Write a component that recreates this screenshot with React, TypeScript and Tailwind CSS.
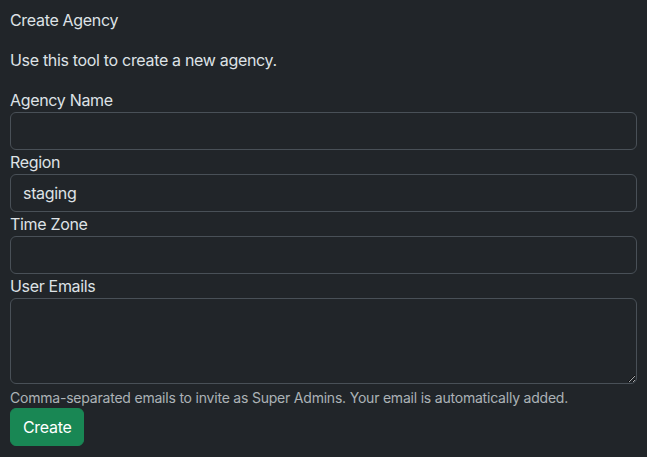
import React, { useState } from "react";

const fields = [
  { id: "name", label: "Agency Name", value: "" },
  { id: "region", label: "Region", value: "staging" },
  { id: "tz", label: "Time Zone", value: "" },
];

const inputClass =
  "block w-full h-[38px] px-3 py-1.5 text-base leading-6 tracking-[-0.02em] text-[#dee2e6] bg-[#212529] border border-[#495057] rounded-md outline-none";

const App = () => {
  const [values, setValues] = useState<Record<string, string>>(
    Object.fromEntries(fields.map((f) => [f.id, f.value]))
  );
  const [emails, setEmails] = useState("");

  return (
    <div
      className="min-h-screen bg-[#212529] text-[#dee2e6] text-base leading-6 tracking-[-0.02em] px-[10px] pt-2"
      style={{ fontFamily: "Inter, 'Noto Sans', sans-serif" }}
    >
      <p className="mb-4">Create Agency</p>
      <p className="mb-4">Use this tool to create a new agency.</p>

      <form onSubmit={(e) => e.preventDefault()}>
        {fields.map((f) => (
          <div key={f.id}>
            <label htmlFor={f.id} className="block">
              {f.label}
            </label>
            <input
              id={f.id}
              type="text"
              className={inputClass}
              value={values[f.id]}
              onChange={(e) => setValues({ ...values, [f.id]: e.target.value })}
            />
          </div>
        ))}

        <div>
          <label htmlFor="emails" className="block">
            User Emails
          </label>
          <textarea
            id="emails"
            rows={3}
            className="block w-full h-[86px] px-3 py-1.5 text-base leading-6 text-[#dee2e6] bg-[#212529] border border-[#495057] rounded-md outline-none"
            value={emails}
            onChange={(e) => setEmails(e.target.value)}
          />
          <div className="mt-1 text-sm leading-5 tracking-[-0.015em] text-[#dee2e6bf]">
            Comma-separated emails to invite as Super Admins. Your email is automatically added.
          </div>
        </div>

        <button
          type="submit"
          className="h-[38px] px-3 bg-[#198754] text-white text-base leading-6 tracking-[-0.02em] rounded-md border border-[#198754]"
        >
          Create
        </button>
      </form>
    </div>
  );
};

export default App;
